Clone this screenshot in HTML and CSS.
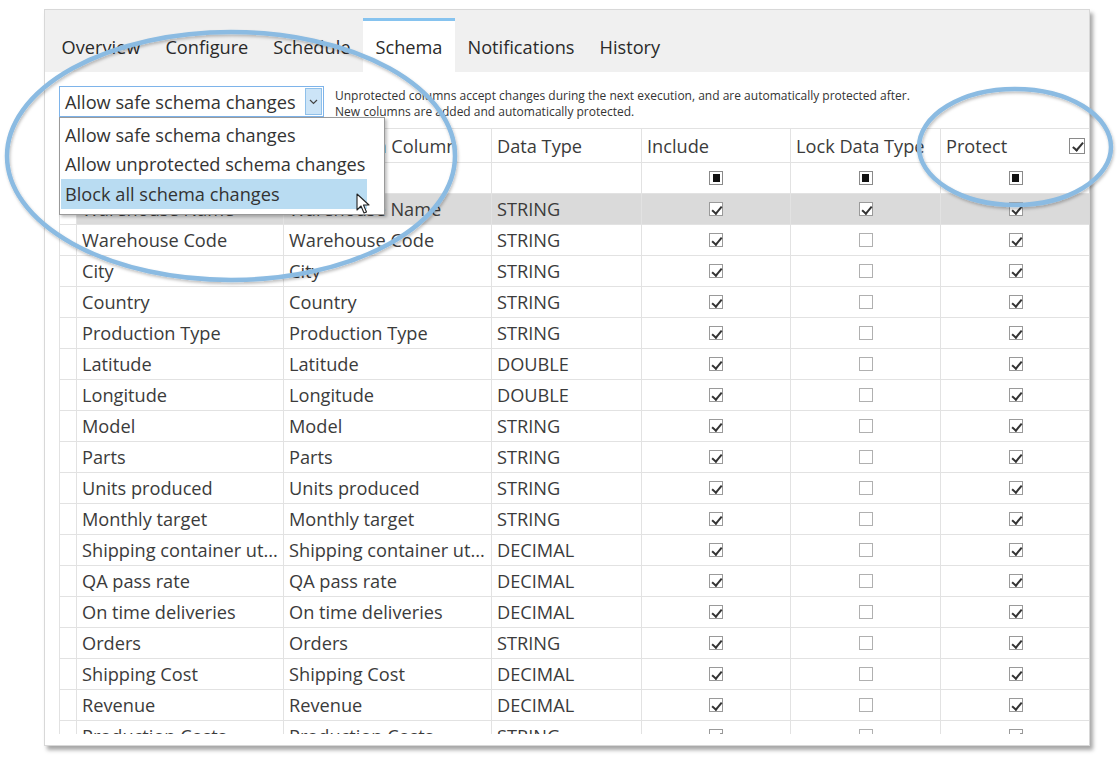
FILE: index.html
```html
<!DOCTYPE html>
<html>
<head>
<meta charset="utf-8">
<link rel="stylesheet" href="styles.css">
</head>
<body>
<div class="window">
  <div class="tabs">
    <div class="tab">Overview</div>
    <div class="tab">Configure</div>
    <div class="tab">Schedule</div>
    <div class="tab active">Schema</div>
    <div class="tab">Notifications</div>
    <div class="tab">History</div>
  </div>
  <div class="content">
    <div class="toolbar">
      <div class="combo-wrap">
        <div class="combo">
          <span class="combo-text">Allow safe schema changes</span>
          <span class="combo-btn"><svg width="9" height="6" viewBox="0 0 9 6"><path d="M1 1 L4.5 4.5 L8 1" fill="none" stroke="#444" stroke-width="1.2"/></svg></span>
        </div>
        <div class="combo-list">
          <div class="item">Allow safe schema changes</div>
          <div class="item">Allow unprotected schema changes</div>
          <div class="item hl">Block all schema changes</div>
        </div>
      </div>
      <p class="desc">Unprotected columns accept changes during the next execution, and are automatically protected after.<br>New columns are added and automatically protected.</p>
    </div>
    <div class="grid">
      <div class="row head">
        <div class="c rh"></div><div class="c">Source Column</div><div class="c">Destination Column</div><div class="c">Data Type</div><div class="c">Include</div><div class="c">Lock Data Type</div><div class="c protect-h">Protect<i class="cb on big"></i></div>
      </div>
      <div class="row filter">
        <div class="c rh"></div><div class="c"></div><div class="c"></div><div class="c"></div><div class="c ck"><i class="cb ind"></i></div><div class="c ck"><i class="cb ind"></i></div><div class="c ck"><i class="cb ind"></i></div>
      </div>
      <div class="row sel"><div class="c rh"></div><div class="c">Warehouse Name</div><div class="c">Warehouse Name</div><div class="c">STRING</div><div class="c ck"><i class="cb on"></i></div><div class="c ck"><i class="cb on"></i></div><div class="c ck"><i class="cb on"></i></div></div>
      <div class="row"><div class="c rh"></div><div class="c">Warehouse Code</div><div class="c">Warehouse Code</div><div class="c">STRING</div><div class="c ck"><i class="cb on"></i></div><div class="c ck"><i class="cb"></i></div><div class="c ck"><i class="cb on"></i></div></div>
      <div class="row"><div class="c rh"></div><div class="c">City</div><div class="c">City</div><div class="c">STRING</div><div class="c ck"><i class="cb on"></i></div><div class="c ck"><i class="cb"></i></div><div class="c ck"><i class="cb on"></i></div></div>
      <div class="row"><div class="c rh"></div><div class="c">Country</div><div class="c">Country</div><div class="c">STRING</div><div class="c ck"><i class="cb on"></i></div><div class="c ck"><i class="cb"></i></div><div class="c ck"><i class="cb on"></i></div></div>
      <div class="row"><div class="c rh"></div><div class="c">Production Type</div><div class="c">Production Type</div><div class="c">STRING</div><div class="c ck"><i class="cb on"></i></div><div class="c ck"><i class="cb"></i></div><div class="c ck"><i class="cb on"></i></div></div>
      <div class="row"><div class="c rh"></div><div class="c">Latitude</div><div class="c">Latitude</div><div class="c">DOUBLE</div><div class="c ck"><i class="cb on"></i></div><div class="c ck"><i class="cb"></i></div><div class="c ck"><i class="cb on"></i></div></div>
      <div class="row"><div class="c rh"></div><div class="c">Longitude</div><div class="c">Longitude</div><div class="c">DOUBLE</div><div class="c ck"><i class="cb on"></i></div><div class="c ck"><i class="cb"></i></div><div class="c ck"><i class="cb on"></i></div></div>
      <div class="row"><div class="c rh"></div><div class="c">Model</div><div class="c">Model</div><div class="c">STRING</div><div class="c ck"><i class="cb on"></i></div><div class="c ck"><i class="cb"></i></div><div class="c ck"><i class="cb on"></i></div></div>
      <div class="row"><div class="c rh"></div><div class="c">Parts</div><div class="c">Parts</div><div class="c">STRING</div><div class="c ck"><i class="cb on"></i></div><div class="c ck"><i class="cb"></i></div><div class="c ck"><i class="cb on"></i></div></div>
      <div class="row"><div class="c rh"></div><div class="c">Units produced</div><div class="c">Units produced</div><div class="c">STRING</div><div class="c ck"><i class="cb on"></i></div><div class="c ck"><i class="cb"></i></div><div class="c ck"><i class="cb on"></i></div></div>
      <div class="row"><div class="c rh"></div><div class="c">Monthly target</div><div class="c">Monthly target</div><div class="c">STRING</div><div class="c ck"><i class="cb on"></i></div><div class="c ck"><i class="cb"></i></div><div class="c ck"><i class="cb on"></i></div></div>
      <div class="row"><div class="c rh"></div><div class="c">Shipping container ut...</div><div class="c">Shipping container ut...</div><div class="c">DECIMAL</div><div class="c ck"><i class="cb on"></i></div><div class="c ck"><i class="cb"></i></div><div class="c ck"><i class="cb on"></i></div></div>
      <div class="row"><div class="c rh"></div><div class="c">QA pass rate</div><div class="c">QA pass rate</div><div class="c">DECIMAL</div><div class="c ck"><i class="cb on"></i></div><div class="c ck"><i class="cb"></i></div><div class="c ck"><i class="cb on"></i></div></div>
      <div class="row"><div class="c rh"></div><div class="c">On time deliveries</div><div class="c">On time deliveries</div><div class="c">DECIMAL</div><div class="c ck"><i class="cb on"></i></div><div class="c ck"><i class="cb"></i></div><div class="c ck"><i class="cb on"></i></div></div>
      <div class="row"><div class="c rh"></div><div class="c">Orders</div><div class="c">Orders</div><div class="c">STRING</div><div class="c ck"><i class="cb on"></i></div><div class="c ck"><i class="cb"></i></div><div class="c ck"><i class="cb on"></i></div></div>
      <div class="row"><div class="c rh"></div><div class="c">Shipping Cost</div><div class="c">Shipping Cost</div><div class="c">DECIMAL</div><div class="c ck"><i class="cb on"></i></div><div class="c ck"><i class="cb"></i></div><div class="c ck"><i class="cb on"></i></div></div>
      <div class="row"><div class="c rh"></div><div class="c">Revenue</div><div class="c">Revenue</div><div class="c">DECIMAL</div><div class="c ck"><i class="cb on"></i></div><div class="c ck"><i class="cb"></i></div><div class="c ck"><i class="cb on"></i></div></div>
      <div class="row"><div class="c rh"></div><div class="c">Production Costs</div><div class="c">Production Costs</div><div class="c">STRING</div><div class="c ck"><i class="cb on"></i></div><div class="c ck"><i class="cb"></i></div><div class="c ck"><i class="cb on"></i></div></div>
    </div>
  </div>
</div>
<svg class="cursor" width="16" height="22" viewBox="0 0 16 22"><path d="M1 1 L1 17 L5 13 L8 20 L10.5 19 L7.5 12 L13 12 Z" fill="#fff" stroke="#222" stroke-width="1.1" stroke-linejoin="round"/></svg>
<svg class="annot" width="1120" height="760" viewBox="0 0 1120 760">
  <defs>
    <filter id="sh" x="-10%" y="-10%" width="120%" height="130%">
      <feDropShadow dx="1" dy="2" stdDeviation="1.5" flood-color="#000" flood-opacity="0.25"/>
    </filter>
  </defs>
  <ellipse cx="231" cy="156" rx="224" ry="124" fill="none" stroke="#8bbbe2" stroke-width="4.5" filter="url(#sh)"/>
  <ellipse cx="1015" cy="147" rx="96" ry="58" fill="none" stroke="#8bbbe2" stroke-width="4.5" filter="url(#sh)"/>
</svg>
</body>
</html>
```
FILE: styles.css
```css
html, body {
  margin: 0;
  padding: 0;
  background: #fff;
}
body {
  font-family: "Open Sans", "Noto Sans", sans-serif;
  color: #3b3b3b;
  width: 1120px;
  height: 760px;
  overflow: hidden;
  position: relative;
}
.window {
  margin: 9px 0 0 44px;
  width: 1046px;
  height: 737px;
  background: #fff;
  border: 1px solid #d8d8d8;
  box-sizing: border-box;
  box-shadow: 3px 4px 4px rgba(0,0,0,0.35);
  display: flex;
  flex-direction: column;
  overflow: hidden;
}
.tabs {
  height: 62px;
  background: #f0f0f0;
  display: flex;
  align-items: flex-end;
  padding-left: 4px;
  flex-shrink: 0;
}
.tab {
  height: 54px;
  padding: 0 12.5px;
  font-size: 18.2px;
  color: #2a2a2a;
  display: flex;
  align-items: center;
  box-sizing: border-box;
  border-top: 3px solid transparent;
}
.tab.active {
  background: #fff;
  border-top-color: #86c3ef;
}
.content {
  padding: 14px 0 0 14px;
  flex: 1;
  display: flex;
  flex-direction: column;
  min-height: 0;
}
.toolbar {
  display: flex;
  align-items: flex-start;
  height: 42px;
  flex-shrink: 0;
}
.combo-wrap {
  position: relative;
  width: 265px;
  flex-shrink: 0;
}
.combo {
  height: 31px;
  border: 1px solid #7eb4ea;
  box-sizing: border-box;
  display: flex;
  align-items: center;
  justify-content: space-between;
  padding: 0 1px 0 5px;
  font-size: 18.2px;
  color: #333;
}
.combo-btn {
  width: 17px;
  height: 27px;
  background: #cce4f7;
  border: 1px solid #8fc0ea;
  box-sizing: border-box;
  display: flex;
  align-items: center;
  justify-content: center;
}
.combo-list {
  position: absolute;
  left: 0;
  top: 31px;
  width: 326px;
  height: 98px;
  background: #fff;
  border: 1px solid #9a9a9a;
  box-sizing: border-box;
  box-shadow: 2px 2px 3px rgba(0,0,0,0.25);
  padding: 2px 17px 0 1px;
  z-index: 5;
}
.item {
  height: 29.5px;
  display: flex;
  align-items: center;
  padding-left: 4px;
  font-size: 18.2px;
  color: #333;
}
.item.hl {
  background: #b9dcf2;
}
.desc {
  margin: 2px 0 0 11px;
  font-size: 12px;
  line-height: 16px;
  color: #333;
}
.grid {
  border-top: 1px solid #e2e2e2;
  border-left: 1px solid #e2e2e2;
  overflow: hidden;
  flex: 1;
  margin-bottom: 11px;
}
.row {
  display: grid;
  grid-template-columns: 17px 207px 208px 150px 149px 150px 150px;
  height: 31px;
}
.row.head {
  height: 34px;
}
.c {
  border-right: 1px solid #e2e2e2;
  border-bottom: 1px solid #e2e2e2;
  box-sizing: border-box;
  display: flex;
  align-items: center;
  padding-left: 5px;
  font-size: 18.2px;
  white-space: nowrap;
  overflow: hidden;
}
.c.rh {
  padding: 0;
  background: #fff;
}
.row.sel .c {
  background: #dadada;
}
.row.sel .c.rh {
  background: #fff;
}
.c.ck {
  justify-content: center;
  padding: 0;
}
.protect-h {
  justify-content: space-between;
  padding-right: 5px;
}
.cb {
  display: block;
  width: 14px;
  height: 14px;
  border: 1px solid #b0b0b0;
  box-sizing: border-box;
  background: #fff;
  position: relative;
}
.cb.on {
  border-color: #9a9a9a;
}
.cb.on::after {
  content: "";
  position: absolute;
  left: 4px;
  top: 0.5px;
  width: 3.5px;
  height: 8px;
  border: solid #333;
  border-width: 0 2px 2px 0;
  transform: rotate(40deg);
}
.cb.big {
  width: 16px;
  height: 16px;
  border-color: #8a8a8a;
}
.cb.big::after {
  left: 4.5px;
  top: 1px;
  width: 4px;
  height: 9px;
}
.cb.ind {
  border-color: #8a8a8a;
}
.cb.ind::after {
  content: "";
  position: absolute;
  left: 2.5px;
  top: 2px;
  width: 7px;
  height: 8px;
  background: #111;
}
.cursor {
  position: absolute;
  left: 356px;
  top: 193px;
  z-index: 10;
}
.annot {
  position: absolute;
  left: 0;
  top: 0;
  pointer-events: none;
  z-index: 20;
}
```
